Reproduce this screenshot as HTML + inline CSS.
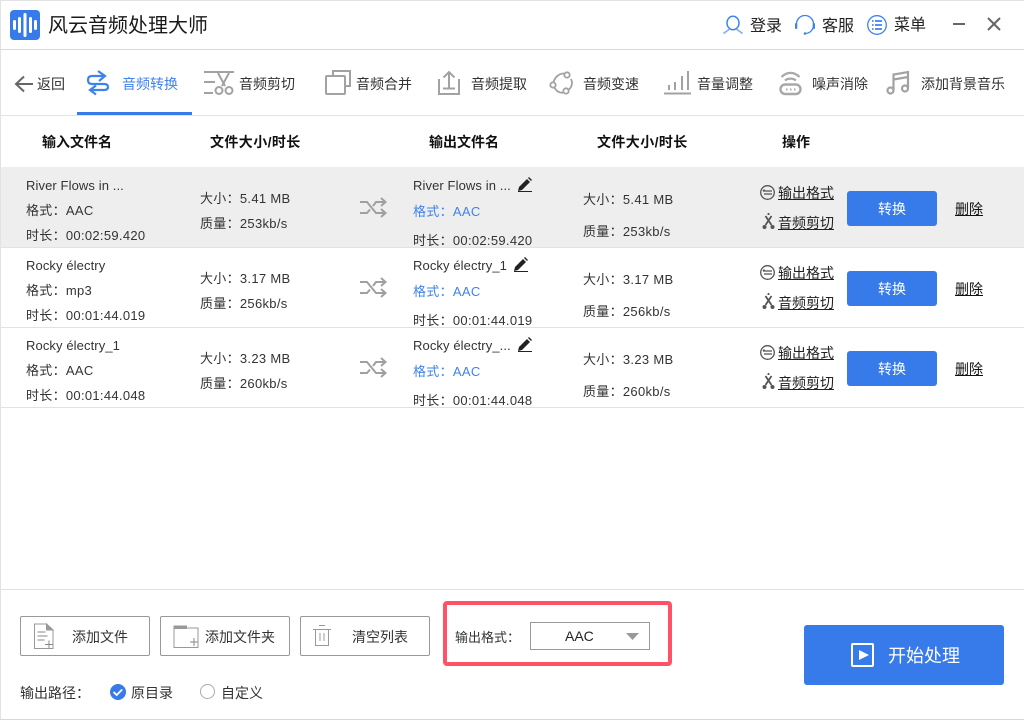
<!DOCTYPE html>
<html lang="zh"><head><meta charset="utf-8"><style>
html,body{margin:0;padding:0;background:#fff}
body{width:1024px;height:720px;position:relative;overflow:hidden;font-family:"Liberation Sans","Noto Sans CJK SC",sans-serif;color:#333;font-size:14px}
.t{position:absolute;white-space:nowrap;line-height:20px;height:20px;margin-top:1px}
.l{position:absolute}
svg{position:absolute;overflow:visible}
.row{position:absolute;left:1px;width:1023px;height:80px}
.row .t{margin-left:-1px;font-size:13px;letter-spacing:.3px}
.row .t.nm{letter-spacing:.1px}
.row .t.u{font-size:14px;letter-spacing:0}
.u{text-decoration:underline;color:#222}
.b{font-weight:bold;color:#111}
.blue{color:#3f82ec}
.btn{position:absolute;left:846px;top:24px;width:90px;height:35px;background:#377bea;border-radius:3px;color:#fff;text-align:center;line-height:36px;font-size:14px}
.fb{position:absolute;top:616px;width:128px;height:38px;border:1px solid #999;border-radius:2px}
</style></head><body>
<div class="l" style="left:0;top:0;width:1024px;height:1px;background:#e2e2e2"></div>
<div class="l" style="left:0;top:0;width:1px;height:720px;background:#e2e2e2"></div>
<div class="l" style="left:0;top:49px;width:1024px;height:1px;background:#d8d8d8"></div>
<div class="l" style="left:0;top:115px;width:1024px;height:1px;background:#e2e2e2"></div>
<div class="l" style="left:77px;top:112px;width:115px;height:3px;background:#377bea"></div>
<div class="l" style="left:0;top:589px;width:1024px;height:1px;background:#e2e2e2"></div>
<div class="l" style="left:0;top:719px;width:1024px;height:1px;background:#d8d8d8"></div>

<svg style="left:10px;top:10px" width="30" height="30" viewBox="0 0 30 30"><rect width="30" height="30" rx="4" fill="#377bea"/><g stroke="#fff" stroke-width="3" stroke-linecap="round"><path d="M4.500 11.500v7M9.500 8.500v13M15 4.500v21M20.500 8.500v13M25.500 11.500v7"/></g></svg>
<div class="t" style="left:48px;top:12px;font-size:20px;line-height:26px;height:26px;color:#1a1a1a">风云音频处理大师</div>

<svg style="left:723px;top:15px" width="20" height="20" viewBox="0 0 20 20" fill="none" stroke="#3f82ec" stroke-width="1.500"><ellipse cx="10" cy="8" rx="6" ry="6.800"/><path d="M6.500 14C5 15.500 3 16.500 0.500 18.500M13.500 14C15 15.500 17 16.500 19.500 18.500" stroke="#8ab4f2" stroke-width="1.800"/></svg>
<div class="t" style="left:750px;top:16px;font-size:16px;color:#222">登录</div>
<svg style="left:795px;top:15px" width="20" height="20" viewBox="0 0 20 20" fill="none" stroke="#3f82ec" stroke-width="1.300"><path d="M1.500 9a8.500 8.500 0 0 1 17 0M18.500 11C18 15 15 18 11 18.500"/><rect x="0" y="8" width="2.300" height="6" rx="1" fill="#3f82ec" stroke="none"/><rect x="17.700" y="8" width="2.300" height="6" rx="1" fill="#3f82ec" stroke="none"/><circle cx="10" cy="18.500" r="1.300" fill="#3f82ec" stroke="none"/></svg>
<div class="t" style="left:822px;top:16px;font-size:16px;color:#222">客服</div>
<svg style="left:867px;top:15px" width="20" height="20" viewBox="0 0 20 20" fill="none" stroke="#3f82ec" stroke-width="1.300"><circle cx="10" cy="10" r="9.300"/><path d="M8 6h7M8 10h7M8 14h7M5 6h1.500M5 10h1.500M5 14h1.500" stroke-width="1.800"/></svg>
<div class="t" style="left:894px;top:15px;font-size:16px;color:#222">菜单</div>
<svg style="left:953px;top:18px" width="14" height="14"><path d="M0 6h12" stroke="#666" stroke-width="2"/></svg>
<svg style="left:988px;top:18px" width="13" height="13"><path d="M0 0l12 12M12 0L0 12" stroke="#666" stroke-width="2"/></svg>

<svg style="left:14px;top:75px" width="20" height="18" viewBox="0 0 20 18" fill="none" stroke="#666" stroke-width="2"><path d="M19 9H2M10 1.500L2 9l8 7.500"/></svg>
<div class="t" style="left:37px;top:73px">返回</div>

<svg style="left:80px;top:65px" width="35" height="40" viewBox="80 65 35 40" fill="none" stroke="#3f82ec" stroke-width="2.200"><path d="M98 71L105 76 99 81M105 76H92Q88 76 88 80 88 84 92 84H104Q108 84 108 87 108 90 104 90H90M96 85.500L90 90 96 94.500"/></svg>
<div class="t blue" style="left:122px;top:73px">音频转换</div>

<svg style="left:204px;top:71px" width="30" height="24" viewBox="0 0 30 24" fill="none" stroke="#a2a2a2" stroke-width="2"><path d="M0 1h30M0 11h11M0 22h9"/><path d="M14 2l7 13M25 2l-7 13"/><circle cx="15" cy="19.500" r="3.500"/><circle cx="25" cy="19.500" r="3.500"/></svg>
<div class="t" style="left:239px;top:73px">音频剪切</div>

<svg style="left:325px;top:70px" width="27" height="25" viewBox="0 0 27 25" fill="none" stroke="#a2a2a2" stroke-width="2"><path d="M8 5V1h17v15h-4"/><rect x="1" y="6" width="19" height="18" rx="1"/></svg>
<div class="t" style="left:356px;top:73px">音频合并</div>

<svg style="left:438px;top:71px" width="22" height="24" viewBox="0 0 22 24" fill="none" stroke="#a2a2a2" stroke-width="2"><path d="M1 8v15h20V8M11 17V1.500M5.500 6.500L11 1l5.500 5.500M5 17.500h12"/></svg>
<div class="t" style="left:471px;top:73px">音频提取</div>

<svg style="left:550px;top:70px" width="24" height="25" viewBox="0 0 24 25" fill="none" stroke="#a2a2a2" stroke-width="1.800"><circle cx="17" cy="5" r="2.700"/><circle cx="3" cy="15" r="2.700"/><circle cx="16" cy="21" r="2.700"/><path d="M14 3.500C9 3.500 5 7 3.500 12M4.500 18C7 21.500 9 22.800 13 22.800M19 19.500C21 17.500 22 15 22 13 22 11.500 21.500 10 21 9"/></svg>
<div class="t" style="left:583px;top:73px">音频变速</div>

<svg style="left:664px;top:71px" width="27" height="24" viewBox="0 0 27 24" fill="none" stroke="#a2a2a2" stroke-width="2"><path d="M0 22.500h27M5 19v-5M11 19v-8M18 19V5M24 19V0"/></svg>
<div class="t" style="left:697px;top:73px">音量调整</div>

<svg style="left:779px;top:71px" width="23" height="24" viewBox="0 0 23 24" fill="none" stroke="#a8a8a8" stroke-width="2"><path d="M2.500 6C8 .5 15 .5 20.500 6M6 9.500C9 7 14 7 17 9.500" stroke-width="2.200"/><rect x="1.500" y="13.500" width="20" height="9.500" rx="4.700" stroke-width="2.400"/><path d="M7 18.500h1.500M11 18.500h1.500M15 18.500h1.500"/></svg>
<div class="t" style="left:812px;top:73px">噪声消除</div>

<svg style="left:886px;top:71px" width="24" height="24" viewBox="0 0 24 24" fill="none" stroke="#a2a2a2" stroke-width="2.200"><circle cx="4.500" cy="19.500" r="3"/><circle cx="19" cy="17.500" r="3"/><path d="M7.500 19.500V3.500L22 1v16.500M7.500 8.500L22 6"/></svg>
<div class="t" style="left:921px;top:73px">添加背景音乐</div>

<div class="t b" style="left:42px;top:131px">输入文件名</div>
<div class="t b" style="left:210px;top:131px;letter-spacing:.4px">文件大小/时长</div>
<div class="t b" style="left:429px;top:131px">输出文件名</div>
<div class="t b" style="left:597px;top:131px;letter-spacing:.4px">文件大小/时长</div>
<div class="t b" style="left:782px;top:131px">操作</div>

<div class="row" style="top:167px;background:#eee;height:80px">
<div class="t nm" style="left:26px;top:8px">River Flows in ...</div>
<div class="t" style="left:26px;top:33px">格式：AAC</div>
<div class="t" style="left:26px;top:58px">时长：00:02:59.420</div>
<div class="t" style="left:200px;top:21px">大小：5.41 MB</div>
<div class="t" style="left:200px;top:46px">质量：253kb/s</div>
<svg style="left:359px;top:32px" width="27" height="18" viewBox="0 0 27 18" fill="none" stroke="#a0a0a0" stroke-width="2"><path d="M0 3h7l9 11h9M0 14h7l3-3.500M13 7l3-4h9M21 -1l4.500 4-4.500 4M21 10l4.500 4-4.500 4"/></svg>
<div class="t nm" style="left:413px;top:8px">River Flows in ...</div>
<svg style="left:517px;top:10px" width="14" height="15" viewBox="0 0 14 15"><path d="M1 10L9 2l3 3-8 8-4 1zM10 1l1-1 3 3-1 1z" fill="#222"/><path d="M0 14.500h14" stroke="#222"/></svg>
<div class="t blue" style="left:413px;top:34px">格式：AAC</div>
<div class="t" style="left:413px;top:63px">时长：00:02:59.420</div>
<div class="t" style="left:583px;top:22px">大小：5.41 MB</div>
<div class="t" style="left:583px;top:54px">质量：253kb/s</div>
<svg style="left:759px;top:18px" width="15" height="15" viewBox="0 0 15 15" fill="none" stroke="#555" stroke-width="1.300"><circle cx="7.500" cy="7.500" r="6.800"/><path d="M3 6h9M12 9H4M4.500 4.500L3 6"/></svg>
<div class="t u" style="left:778px;top:15px">输出格式</div>
<svg style="left:761px;top:46px" width="13" height="17" viewBox="0 0 13 17" fill="none" stroke="#555" stroke-width="1.800"><path d="M6.500 0v2M3.500 3l6 9M9.500 3l-6 9"/><circle cx="2.500" cy="14" r="2" fill="#555" stroke="none"/><circle cx="10.500" cy="14" r="2" fill="#555" stroke="none"/></svg>
<div class="t u" style="left:778px;top:45px">音频剪切</div>
<div class="btn">转换</div>
<div class="t u b" style="left:955px;top:31px;font-weight:normal;color:#111">删除</div>
</div>

<div class="l" style="left:0;top:247px;width:1024px;height:1px;background:#e2e2e2"></div>
<div class="row" style="top:247px">
<div class="t nm" style="left:26px;top:8px">Rocky électry</div>
<div class="t" style="left:26px;top:33px">格式：mp3</div>
<div class="t" style="left:26px;top:58px">时长：00:01:44.019</div>
<div class="t" style="left:200px;top:21px">大小：3.17 MB</div>
<div class="t" style="left:200px;top:46px">质量：256kb/s</div>
<svg style="left:359px;top:32px" width="27" height="18" viewBox="0 0 27 18" fill="none" stroke="#a0a0a0" stroke-width="2"><path d="M0 3h7l9 11h9M0 14h7l3-3.500M13 7l3-4h9M21 -1l4.500 4-4.500 4M21 10l4.500 4-4.500 4"/></svg>
<div class="t nm" style="left:413px;top:8px">Rocky électry_1</div>
<svg style="left:513px;top:10px" width="14" height="15" viewBox="0 0 14 15"><path d="M1 10L9 2l3 3-8 8-4 1zM10 1l1-1 3 3-1 1z" fill="#222"/><path d="M0 14.500h14" stroke="#222"/></svg>
<div class="t blue" style="left:413px;top:34px">格式：AAC</div>
<div class="t" style="left:413px;top:63px">时长：00:01:44.019</div>
<div class="t" style="left:583px;top:22px">大小：3.17 MB</div>
<div class="t" style="left:583px;top:54px">质量：256kb/s</div>
<svg style="left:759px;top:18px" width="15" height="15" viewBox="0 0 15 15" fill="none" stroke="#555" stroke-width="1.300"><circle cx="7.500" cy="7.500" r="6.800"/><path d="M3 6h9M12 9H4M4.500 4.500L3 6"/></svg>
<div class="t u" style="left:778px;top:15px">输出格式</div>
<svg style="left:761px;top:46px" width="13" height="17" viewBox="0 0 13 17" fill="none" stroke="#555" stroke-width="1.800"><path d="M6.500 0v2M3.500 3l6 9M9.500 3l-6 9"/><circle cx="2.500" cy="14" r="2" fill="#555" stroke="none"/><circle cx="10.500" cy="14" r="2" fill="#555" stroke="none"/></svg>
<div class="t u" style="left:778px;top:45px">音频剪切</div>
<div class="btn">转换</div>
<div class="t u b" style="left:955px;top:31px;font-weight:normal;color:#111">删除</div>
</div>

<div class="l" style="left:0;top:327px;width:1024px;height:1px;background:#e2e2e2"></div>
<div class="row" style="top:327px">
<div class="t nm" style="left:26px;top:8px">Rocky électry_1</div>
<div class="t" style="left:26px;top:33px">格式：AAC</div>
<div class="t" style="left:26px;top:58px">时长：00:01:44.048</div>
<div class="t" style="left:200px;top:21px">大小：3.23 MB</div>
<div class="t" style="left:200px;top:46px">质量：260kb/s</div>
<svg style="left:359px;top:32px" width="27" height="18" viewBox="0 0 27 18" fill="none" stroke="#a0a0a0" stroke-width="2"><path d="M0 3h7l9 11h9M0 14h7l3-3.500M13 7l3-4h9M21 -1l4.500 4-4.500 4M21 10l4.500 4-4.500 4"/></svg>
<div class="t nm" style="left:413px;top:8px">Rocky électry_...</div>
<svg style="left:517px;top:10px" width="14" height="15" viewBox="0 0 14 15"><path d="M1 10L9 2l3 3-8 8-4 1zM10 1l1-1 3 3-1 1z" fill="#222"/><path d="M0 14.500h14" stroke="#222"/></svg>
<div class="t blue" style="left:413px;top:34px">格式：AAC</div>
<div class="t" style="left:413px;top:63px">时长：00:01:44.048</div>
<div class="t" style="left:583px;top:22px">大小：3.23 MB</div>
<div class="t" style="left:583px;top:54px">质量：260kb/s</div>
<svg style="left:759px;top:18px" width="15" height="15" viewBox="0 0 15 15" fill="none" stroke="#555" stroke-width="1.300"><circle cx="7.500" cy="7.500" r="6.800"/><path d="M3 6h9M12 9H4M4.500 4.500L3 6"/></svg>
<div class="t u" style="left:778px;top:15px">输出格式</div>
<svg style="left:761px;top:46px" width="13" height="17" viewBox="0 0 13 17" fill="none" stroke="#555" stroke-width="1.800"><path d="M6.500 0v2M3.500 3l6 9M9.500 3l-6 9"/><circle cx="2.500" cy="14" r="2" fill="#555" stroke="none"/><circle cx="10.500" cy="14" r="2" fill="#555" stroke="none"/></svg>
<div class="t u" style="left:778px;top:45px">音频剪切</div>
<div class="btn">转换</div>
<div class="t u b" style="left:955px;top:31px;font-weight:normal;color:#111">删除</div>
</div>
<div class="l" style="left:0;top:407px;width:1024px;height:1px;background:#e2e2e2"></div>

<div class="fb" style="left:20px"></div>
<svg style="left:33px;top:623px" width="21" height="27" viewBox="0 0 21 27" fill="none" stroke="#999" stroke-width="1"><path d="M1.500 1h12L20 7v18.500H1.500z"/><path d="M13.500 1L20 7h-6.500z" fill="#999"/><path d="M4.500 9h8M4.500 13h10M4.500 17h7M12 21.500h8M16 17.500v8" stroke="#888"/></svg>
<div class="t" style="left:72px;top:626px">添加文件</div>

<div class="fb" style="left:160px"></div>
<svg style="left:173px;top:625px" width="26" height="23" viewBox="0 0 26 23" fill="none" stroke="#999"><path d="M1 3h24v19.500H1z"/><path d="M0.500 0.500h13.500V4H0.500z" fill="#999" stroke="none"/><path d="M17 17h8M21 13v8" stroke="#888"/></svg>
<div class="t" style="left:205px;top:626px">添加文件夹</div>

<div class="fb" style="left:300px"></div>
<svg style="left:313px;top:625px" width="18" height="21" viewBox="0 0 18 21" fill="none" stroke="#999"><path d="M0 4.500h18M6 .5h6M2.500 4.500v16h13v-16M7 8v8M11 8v8"/></svg>
<div class="t" style="left:352px;top:626px">清空列表</div>

<div class="t" style="left:20px;top:682px">输出路径：</div>
<svg style="left:110px;top:684px" width="16" height="16" viewBox="0 0 16 16"><circle cx="8" cy="8" r="8" fill="#377bea"/><path d="M3.500 8l3.200 3 5.500-5.500" fill="none" stroke="#fff" stroke-width="1.800"/></svg>
<div class="t" style="left:131px;top:682px">原目录</div>
<svg style="left:200px;top:684px" width="15" height="15"><circle cx="7.500" cy="7.500" r="7" fill="none" stroke="#aaa"/></svg>
<div class="t" style="left:221px;top:682px">自定义</div>

<div class="l" style="left:443px;top:601px;width:221px;height:57px;border:4px solid #ff5266;border-radius:4px"></div>
<div class="t" style="left:455px;top:627px;font-size:13px">输出格式：</div>
<div class="l" style="left:530px;top:622px;width:118px;height:26px;border:1px solid #999"></div>
<div class="t" style="left:565px;top:625px;font-size:14px;color:#222">AAC</div>
<svg style="left:626px;top:633px" width="13" height="7"><path d="M0 0h13L6.500 7z" fill="#999"/></svg>

<div class="l" style="left:804px;top:625px;width:200px;height:60px;background:#377bea;border-radius:3px"></div>
<svg style="left:850px;top:643px" width="25" height="24" viewBox="0 0 25 24" fill="none" stroke="#fff" stroke-width="2"><rect x="2" y="1" width="21" height="22" rx="1"/><path d="M9 7l10 5-10 5z" fill="#fff" stroke="none"/></svg>
<div class="t" style="left:888px;top:643px;height:24px;line-height:24px;font-size:18px;color:#fff">开始处理</div>
</body></html>
